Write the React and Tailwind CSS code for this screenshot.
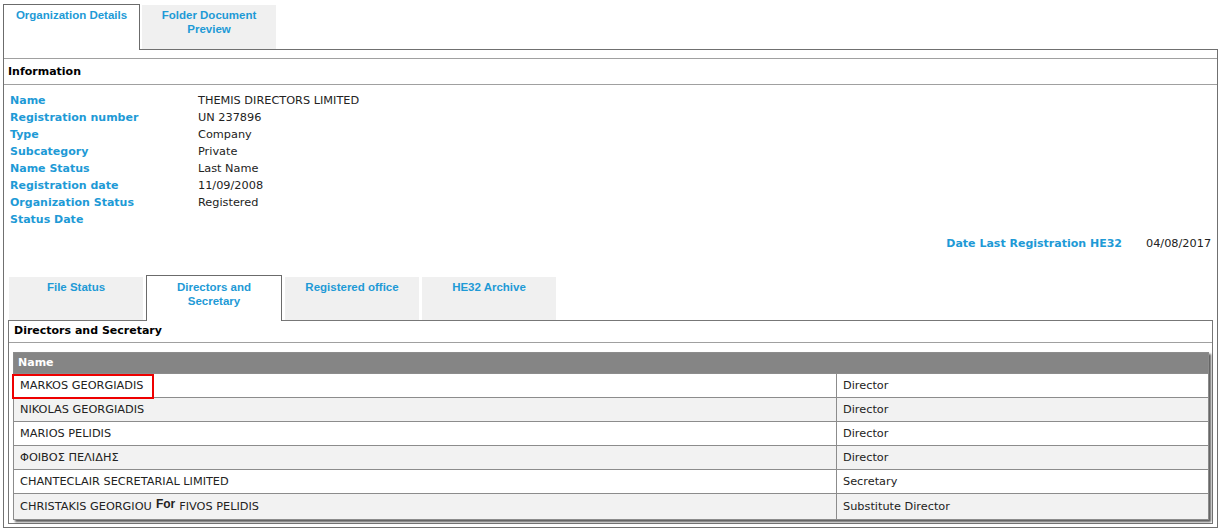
import React from 'react'

const info = [
  ['Name', 'THEMIS DIRECTORS LIMITED'],
  ['Registration number', 'UN 237896'],
  ['Type', 'Company'],
  ['Subcategory', 'Private'],
  ['Name Status', 'Last Name'],
  ['Registration date', '11/09/2008'],
  ['Organization Status', 'Registered'],
  ['Status Date', ''],
]

const people = [
  ['MARKOS GEORGIADIS', 'Director'],
  ['NIKOLAS GEORGIADIS', 'Director'],
  ['MARIOS PELIDIS', 'Director'],
  ['ΦΟΙΒΟΣ ΠΕΛΙΔΗΣ', 'Director'],
  ['CHANTECLAIR SECRETARIAL LIMITED', 'Secretary'],
]

const tabText = "font-['Liberation_Sans',Arial,sans-serif] font-bold text-[11.5px] leading-[14px] text-[#1e9ad6] text-center"

const OuterTabs = () => (
  <div className="relative z-10 -mb-px flex items-end gap-[2px]">
    <div className={`h-[46px] w-[137px] border border-b-0 border-[#6b6b6b] bg-white pt-[3px] ${tabText}`}>
      Organization Details
    </div>
    <div className={`mb-px h-[44px] w-[134px] bg-[#f0f0f0] px-[12px] pt-[3px] ${tabText}`}>
      Folder Document Preview
    </div>
  </div>
)

const InnerTabs = () => (
  <div className="relative z-10 -mb-px flex items-end gap-[3px] pl-[1px]">
    <div className={`mb-px h-[43px] w-[134px] bg-[#f0f0f0] pt-[3px] ${tabText}`}>File Status</div>
    <div className={`h-[46px] w-[136px] border border-b-0 border-[#6b6b6b] bg-white px-[22px] pt-[4px] ${tabText}`}>
      Directors and Secretary
    </div>
    <div className={`mb-px h-[43px] w-[134px] bg-[#f0f0f0] pt-[3px] ${tabText}`}>Registered office</div>
    <div className={`mb-px h-[43px] w-[134px] bg-[#f0f0f0] pt-[3px] ${tabText}`}>HE32 Archive</div>
  </div>
)

const Officers = () => (
  <div className="mx-[3px] mt-[9px] ml-[4px] border border-[#8c8c8c] text-[11.3px] shadow-[2px_2px_2px_rgba(0,0,0,0.65)]">
    <div className="h-[20px] bg-[#858585] pl-[4px] text-[11px] font-bold leading-[20px] text-white">Name</div>
    {people.map(([name, role], i) => (
      <div key={name} className={`flex h-[24px] border-t border-[#8c8c8c] leading-[23px] ${i % 2 ? 'bg-[#f2f2f2]' : 'bg-white'}`}>
        <div className="relative w-[822px] pl-[6px]">
          {name}
          {i === 0 && <span className="absolute -left-[2px] top-0 h-[25px] w-[142px] border-2 border-[#ee0000]" />}
        </div>
        <div className="flex-1 border-l border-[#8c8c8c] pl-[6px]">{role}</div>
      </div>
    ))}
    <div className="flex h-[26px] border-t border-[#8c8c8c] bg-[#f2f2f2] leading-[25px]">
      <div className="w-[822px] pl-[6px]">
        CHRISTAKIS GEORGIOU
        <span className="relative -top-[2px] mx-[4px] font-['Liberation_Sans',Arial,sans-serif] text-[12px] font-bold">For</span>
        FIVOS PELIDIS
      </div>
      <div className="flex-1 border-l border-[#8c8c8c] pl-[6px]">Substitute Director</div>
    </div>
  </div>
)

export default function App() {
  return (
    <div className="min-h-[531px] bg-white pl-[3px] pr-[4px] pt-[4px] font-['DejaVu_Sans',Verdana,sans-serif] text-[11px] text-[#222]">
      <OuterTabs />
      <div className="border border-[#707070] pt-[8px]">
        <div className="h-[27px] border-y border-[#a0a0a0] pl-[4px] font-bold leading-[25px] text-black">Information</div>
        <div className="pt-[7px]">
          {info.map(([label, value]) => (
            <div key={label} className="flex h-[17px] leading-[17px]">
              <div className="w-[194px] pl-[6px] font-bold text-[#1e9ad6]">{label}</div>
              <div className="text-[11.3px]">{value}</div>
            </div>
          ))}
        </div>
        <div className="mt-[7px] flex h-[17px] justify-end leading-[17px]">
          <div className="font-bold text-[#1e9ad6]">Date Last Registration HE32</div>
          <div className="ml-[24px] w-[71px] text-[11.3px]">04/08/2017</div>
        </div>
        <div className="mx-[4px] mb-[3px] mt-[23px]">
          <InnerTabs />
          <div className="border border-[#777] pb-[3px]">
            <div className="h-[22px] border-b border-[#a0a0a0] pl-[5px] font-bold leading-[20px] text-black">Directors and Secretary</div>
            <Officers />
          </div>
        </div>
      </div>
    </div>
  )
}
